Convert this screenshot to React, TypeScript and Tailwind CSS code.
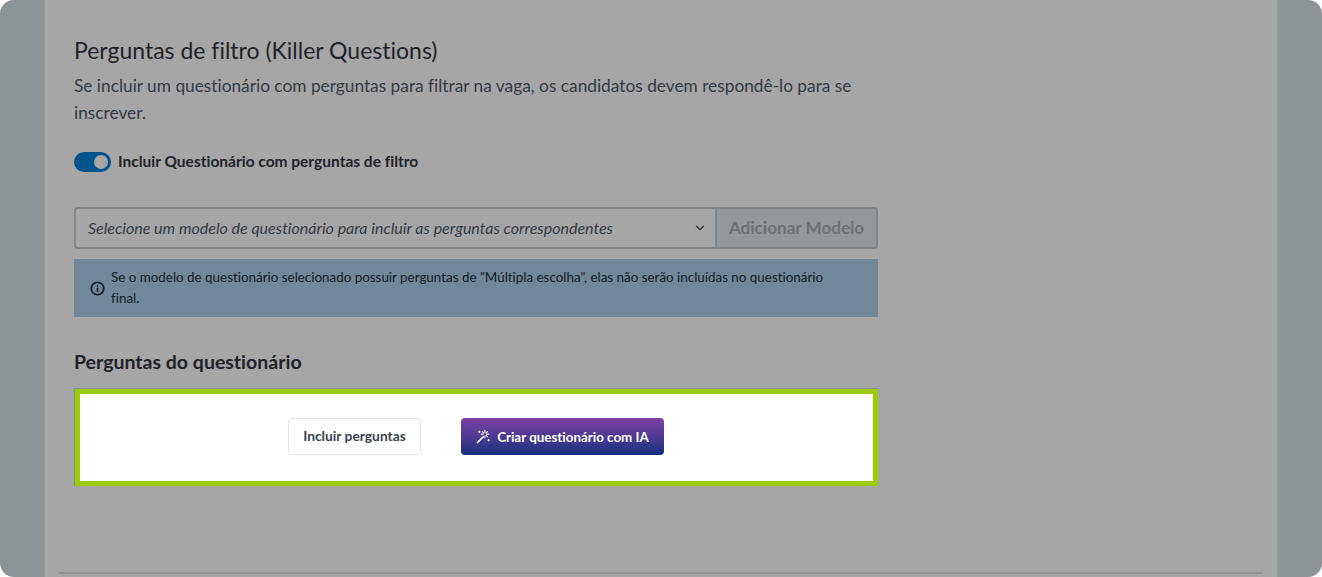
import React from 'react';
import { ChevronDown, Info } from 'lucide-react';

const App: React.FC = () => {
  return (
    <div className="h-[577px] w-[1322px] bg-white font-['Lato','Liberation_Sans',sans-serif] [font-variant-ligatures:no-common-ligatures] overflow-hidden">
      <div className="h-full rounded-[14px] bg-[#8d9498] px-[44px] overflow-hidden">
        <div className="h-full flex flex-col bg-[#a6a6a6] border-x border-[#9a9c9e] px-[14px]">
          <div className="flex-1 px-[15px] pt-[36px]">
            <div className="w-[804px]">
              {/* Header */}
              <h2 className="text-[23px] leading-[28px] text-[#1f2328]">Perguntas de filtro (Killer Questions)</h2>
              <p className="mt-[8px] text-[17.3px] leading-[27px] text-[#333a42]">
                Se incluir um questionário com perguntas para filtrar na vaga, os candidatos devem respondê-lo para se inscrever.
              </p>

              {/* Toggle */}
              <div className="mt-[24px] flex items-center gap-[7px]">
                <div className="h-[20px] w-[37px] rounded-full bg-[#02528c] flex items-center justify-end pr-[3px]">
                  <div className="h-[14px] w-[14px] rounded-full bg-[#a6a6a6]" />
                </div>
                <span className="text-[15.5px] font-bold text-[#1e2329]">Incluir Questionário com perguntas de filtro</span>
              </div>

              {/* Select */}
              <div className="mt-[34px] flex h-[42px]">
                <div className="flex-1 flex items-center justify-between rounded-l-[4px] border-2 border-r-0 border-[#80858a] pl-[12px] pr-[8px]">
                  <span className="text-[16px] italic text-[#333a42]">Selecione um modelo de questionário para incluir as perguntas correspondentes</span>
                  <ChevronDown className="w-[14px] h-[14px] text-[#343a40]" strokeWidth={2.5} />
                </div>
                <div className="w-[163px] flex items-center justify-center rounded-r-[4px] border-2 border-[#80858a] bg-[#93989b] text-[17.1px] font-bold text-[#6c7176]">
                  Adicionar Modelo
                </div>
              </div>

              {/* Alert */}
              <div className="mt-[10px] h-[58px] bg-[#71889b] flex items-center gap-[6px] pl-[16px] pr-[40px]">
                <Info className="w-[15px] h-[15px] shrink-0 text-[#101c27]" strokeWidth={2.75} />
                <p className="text-[13.4px] leading-[21px] text-[#101c27]">
                  Se o modelo de questionário selecionado possuir perguntas de "Múltipla escolha", elas não serão incluídas no questionário final.
                </p>
              </div>

              <h3 className="mt-[31px] text-[19.5px] leading-[28px] font-bold text-[#1f2328]">Perguntas do questionário</h3>

              {/* Highlighted box */}
              <div className="mt-[12px] h-[98px] border-t border-l border-[#8e9194]">
                <div className="h-[97px] border-[5px] border-[#9ccc00] bg-white flex items-center justify-center gap-[40px] pb-[2px] pr-[1px]">
                  <button className="h-[37px] w-[133px] rounded-[4px] border border-[#e4e6ea] bg-white text-[13.8px] font-bold text-[#39424e]">
                    Incluir perguntas
                  </button>
                  <button className="h-[37px] w-[203px] rounded-[4px] bg-gradient-to-b from-[#7e3fa6] to-[#112f7f] text-[13.4px] font-bold text-white flex items-center justify-center gap-[6px]">
                    <svg viewBox="0 0 16 16" className="w-[15px] h-[15px]" fill="none" stroke="currentColor" strokeWidth={1.2} strokeLinecap="round">
                      <path d="M1.5 14.5 8 8" strokeWidth={1.8} />
                      <path d="M9.5 1.5v2M9.5 7.5v2M5.5 5.5h2M11.5 5.5h2M6.8 2.8l1.4 1.4M10.8 6.8l1.4 1.4M12.2 2.8l-1.4 1.4" />
                      <path d="M3.5 2v2M2.5 3h2M13.5 11v2M12.5 12h2" strokeWidth={0.9} />
                    </svg>
                    Criar questionário com IA
                  </button>
                </div>
              </div>
            </div>
          </div>
          <div className="h-[2px] bg-[#8e9194] mb-[3px]" />
        </div>
      </div>
    </div>
  );
};

export default App;
